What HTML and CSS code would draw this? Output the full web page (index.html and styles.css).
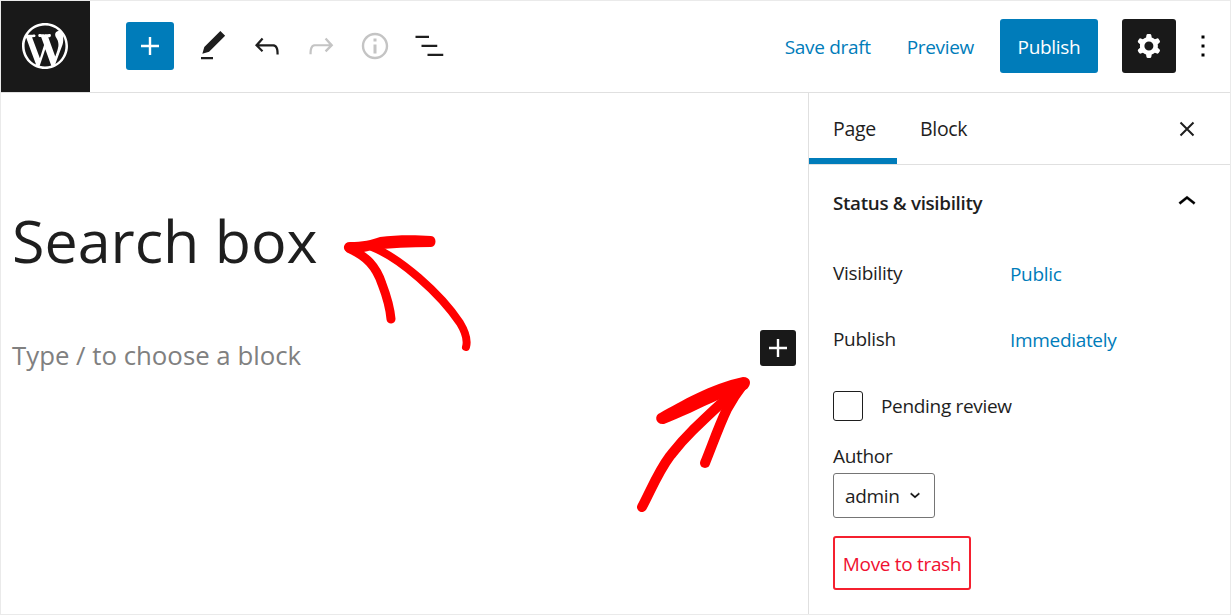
FILE: index.html
```html
<!DOCTYPE html>
<html lang="en">
<head>
<meta charset="utf-8">
<title>Search box</title>
<link rel="stylesheet" href="styles.css">
</head>
<body>
<div class="app">
  <header class="topbar">
    <div class="logo"><svg viewBox="0 0 20 20" width="46" height="46"><path fill="#fff" d="M20 10c0-5.51-4.49-10-10-10C4.48 0 0 4.49 0 10c0 5.52 4.48 10 10 10 5.51 0 10-4.48 10-10zM7.78 15.37L4.37 6.22c.55-.02 1.17-.08 1.17-.08.5-.06.44-1.13-.06-1.11 0 0-1.45.11-2.37.11-.18 0-.37 0-.58-.01C4.12 2.69 6.87 1.11 10 1.11c2.33 0 4.45.87 6.05 2.34-.68-.11-1.65.39-1.65 1.58 0 .74.45 1.36.9 2.1.35.61.55 1.36.55 2.46 0 1.49-1.4 5-1.4 5l-3.03-8.37c.54-.02.82-.17.82-.17.5-.05.44-1.25-.06-1.22 0 0-1.44.12-2.38.12-.87 0-2.33-.12-2.33-.12-.5-.03-.56 1.2-.06 1.22l.92.08 1.26 3.41zM17.41 10c.24-.64.74-1.87.43-4.25.7 1.29 1.05 2.71 1.05 4.25 0 3.29-1.73 6.24-4.4 7.78.97-2.59 1.94-5.2 2.92-7.78zM6.1 18.09C3.12 16.65 1.11 13.53 1.11 10c0-1.3.23-2.48.72-3.59C3.25 10.3 4.67 14.2 6.1 18.09zm4.03-6.63l2.58 6.98c-.86.29-1.76.45-2.71.45-.79 0-1.57-.11-2.29-.33.81-2.38 1.62-4.74 2.42-7.1z"/></svg></div>
    <button class="add-btn"><svg viewBox="0 0 24 24" width="36" height="36"><path fill="#fff" d="M18 11.2h-5.2V6h-1.6v5.2H6v1.6h5.2V18h1.6v-5.2H18z"/></svg></button>
    <div class="tools">
      <span class="tool"><svg viewBox="0 0 24 24" width="36" height="36"><path d="M20.1 5.1L16.9 2 6.2 12.7l-1.3 4.4 4.5-1.3L20.1 5.1zM4 20.8h8v-1.5H4v1.5z"/></svg></span>
      <span class="tool"><svg viewBox="0 0 24 24" width="36" height="36"><path d="M18.3 11.7c-.6-.6-1.4-.9-2.3-.9H6.7l2.9-3.3-1.1-1-4.5 5L8.5 16l1-1-2.7-2.7H16c.5 0 .9.2 1.3.5 1 1 1 3.4 1 4.5v.3h1.5v-.2c0-1.5 0-4.3-1.5-5.7z"/></svg></span>
      <span class="tool off"><svg viewBox="0 0 24 24" width="36" height="36"><path d="M15.6 6.5l-1.1 1 2.9 3.3H8c-.9 0-1.7.3-2.3.9-1.4 1.5-1.4 4.2-1.4 5.6v.2h1.5v-.3c0-1.1 0-3.5 1-4.5.3-.3.7-.5 1.3-.5h9.2L14.5 15l1.1 1.1 4.6-4.6-4.6-5z"/></svg></span>
      <span class="tool off"><svg viewBox="0 0 24 24" width="36" height="36"><path d="M12 3.2c-4.8 0-8.8 3.9-8.8 8.8 0 4.8 3.9 8.8 8.8 8.8 4.8 0 8.8-3.9 8.8-8.8 0-4.8-4-8.800-8.800-8.800zm0 16c-4 0-7.200-3.300-7.200-7.200C4.800 8 8 4.800 12 4.800s7.200 3.300 7.200 7.200c0 4-3.200 7.200-7.200 7.200zM11 17h2v-6h-2v6zm0-8h2V7h-2v2z"/></svg></span>
      <span class="tool"><svg viewBox="0 0 24 24" width="36" height="36"><path d="M3 5.200h9v1.500H3zM7 11.200h10.500v1.500H7zM11 17.200h10.500v1.500H11z"/></svg></span>
    </div>
    <div class="actions">
      <a class="link save">Save draft</a>
      <a class="link preview">Preview</a>
      <button class="publish">Publish</button>
      <button class="gear"><svg viewBox="0 0 24 24" width="36" height="36"><path fill="#fff" fill-rule="evenodd" d="M10.289 4.836A1 1 0 0111.275 4h1.306a1 1 0 01.987.836l.244 1.466c.787.26 1.503.679 2.108 1.218l1.393-.522a1 1 0 011.216.437l.653 1.13a1 1 0 01-.23 1.273l-1.148.944a6.025 6.025 0 010 2.435l1.149.946a1 1 0 01.23 1.272l-.653 1.13a1 1 0 01-1.216.437l-1.394-.522c-.605.54-1.32.958-2.108 1.218l-.244 1.466a1 1 0 01-.987.836h-1.306a1 1 0 01-.986-.836l-.244-1.466a5.995 5.995 0 01-2.108-1.218l-1.394.522a1 1 0 01-1.217-.436l-.653-1.131a1 1 0 01.23-1.272l1.149-.946a6.026 6.026 0 010-2.435l-1.148-.944a1 1 0 01-.23-1.272l.653-1.131a1 1 0 011.217-.437l1.393.522a5.994 5.994 0 012.108-1.218l.244-1.466zM14.929 12a3 3 0 11-6 0 3 3 0 016 0z"/></svg></button>
      <span class="more"><svg viewBox="0 0 24 24" width="36" height="36"><path d="M13 19h-2v-2h2v2zm0-6h-2v-2h2v2zm0-6h-2V5h2v2z"/></svg></span>
    </div>
  </header>
  <div class="workspace">
    <main class="editor">
      <h1 class="title">Search box</h1>
      <div class="block-row">
        <p class="placeholder">Type / to choose a block</p>
        <button class="block-add"><svg viewBox="0 0 24 24" width="36" height="36"><path fill="#fff" d="M18 11.200h-5.200V6h-1.600v5.200H6v1.600h5.200V18h1.600v-5.200H18z"/></svg></button>
      </div>
    </main>
    <aside class="sidebar">
      <div class="tabs">
        <span class="tab active">Page</span>
        <span class="tab">Block</span>
        <span class="close"><svg viewBox="0 0 24 24" width="24" height="24"><path fill="none" stroke="#1e1e1e" stroke-width="2" d="M5.500 5.500 18.500 18.500M18.500 5.500 5.500 18.500"/></svg></span>
      </div>
      <section class="panel">
        <div class="panel-head">
          <h2 class="panel-title">Status &amp; visibility</h2>
          <svg class="chev" viewBox="0 0 24 24" width="36" height="36"><path stroke="#1e1e1e" stroke-width=".2" d="M6.500 12.400L12 8l5.500 4.400-.9 1.200L12 10l-4.500 3.600-1-1.200z"/></svg>
        </div>
        <div class="row"><span>Visibility</span><a class="link">Public</a></div>
        <div class="row"><span>Publish</span><a class="link">Immediately</a></div>
        <label class="check"><span class="box"></span><span>Pending review</span></label>
        <div class="author-label">Author</div>
        <div class="select">admin<svg viewBox="0 0 24 24" width="20" height="20"><path stroke="#1e1e1e" stroke-width=".6" d="M17.500 9.500 12 14.500 6.500 9.500l1.100-1.100 4.400 4 4.400-4z"/></svg></div>
        <button class="trash">Move to trash</button>
      </section>
    </aside>
  </div>
  <svg class="arrows" viewBox="0 0 1231 615" width="1231" height="615" fill="none" stroke="#f00" stroke-linecap="round" stroke-linejoin="round">
    <path fill="#f00" stroke="none" d="M350 242C362 242 372 240 380 237C395 235 415 235 431 236C437 236 437 247 431 247C410 247 390 248 372 250C362 253 352 254 347 252C342 250 343 242 350 242Z"/>
    <path stroke-width="9" d="M350 249C366 256 376 266 382 284C387 297 390 308 391 319"/>
    <path stroke-width="8" d="M372 247C400 258 440 293 460 323C466 333 468 340 466 347"/>
    <path fill="#f00" stroke="none" d="M743 377C751 377 752 384 747 389L720 399C700 408 680 418 664 424C655 425 654 415 660 413C680 402 710 384 743 377Z"/>
    <path stroke-width="10" d="M742 386C722 401 708 416 693 430C680 443 678 446 670 456C658 472 651 490 642 507"/>
    <path stroke-width="10" d="M742 386C735 395 732 400 727 409C718 428 712 446 705 463"/>
  </svg>
</div>
</body>
</html>
```
FILE: styles.css
```css
* { box-sizing: border-box; }
html, body { margin: 0; padding: 0; }
body {
  width: 1231px;
  height: 615px;
  overflow: hidden;
  background: #fff;
  color: #1e1e1e;
  font-family: "Open Sans", "Noto Sans", sans-serif;
  font-size: 19px;
  letter-spacing: -0.32px;
}
button { font: inherit; letter-spacing: inherit; border: 0; padding: 0; cursor: pointer; }
svg { display: block; }

.app {
  position: relative;
  display: flex;
  flex-direction: column;
  height: 615px;
  border: 1px solid #eaeaea;
}

.topbar {
  display: flex;
  align-items: center;
  height: 92px;
  flex: none;
  padding-bottom: 2px;
  border-bottom: 1px solid #e0e0e0;
}
.logo {
  align-self: flex-start;
  width: 89px;
  height: 91px;
  padding: 0 2px 1px 0;
  background: #191919;
  display: flex;
  align-items: center;
  justify-content: center;
}
.add-btn {
  width: 48px;
  height: 48px;
  margin-left: 36px;
  border-radius: 3px;
  background: #007cba;
  display: flex;
  align-items: center;
  justify-content: center;
}
.tools { display: flex; margin-left: 12px; }
.tool {
  width: 54px;
  display: flex;
  justify-content: center;
  fill: #1e1e1e;
}
.tool.off { fill: #c4c4c4; }

.actions {
  margin-left: auto;
  display: flex;
  align-items: center;
}
.link { color: #007cba; }
.save { margin: 2px 36px 0 0; }
.preview { margin: 2px 26px 0 0; }
.publish {
  width: 98px;
  height: 54px;
  padding-top: 2px;
  border-radius: 3px;
  background: #007cba;
  color: #fff;
  margin-right: 24px;
}
.gear {
  width: 54px;
  height: 54px;
  border-radius: 3px;
  background: #191919;
  display: flex;
  align-items: center;
  justify-content: center;
}
.more { margin: 0 9px; }

.workspace { flex: 1; display: flex; min-height: 0; }

.editor { flex: 1; padding: 0 12px 0 11px; }
.title {
  margin: 111px 0 0;
  font-size: 59.200px;
  line-height: 72px;
  font-weight: 400;
  letter-spacing: 0;
}
.block-row {
  display: flex;
  align-items: flex-start;
  justify-content: space-between;
  margin-top: 54px;
}
.placeholder {
  margin: 7px 0 0;
  color: #808080;
  font-size: 25.800px;
  line-height: 36px;
  letter-spacing: 0;
}
.block-add {
  width: 36px;
  height: 36px;
  border-radius: 3px;
  background: #191919;
}

.sidebar { width: 422px; flex: none; border-left: 1px solid #e0e0e0; }
.tabs {
  display: flex;
  align-items: stretch;
  height: 72px;
  border-bottom: 1px solid #e0e0e0;
}
.tab {
  display: flex;
  align-items: center;
  padding: 0 24px;
  font-weight: 500;
  font-size: 19.500px;
  margin-right: -1px;
}
.tab.active { width: 88px; box-shadow: inset 0 -6px 0 #007cba; }
.close { margin-left: auto; margin-right: 31px; align-self: center; }

.panel { padding: 0 24px; }
.panel-head {
  display: flex;
  align-items: center;
  justify-content: space-between;
  height: 75px;
  padding-right: 1px;
}
.chev { margin-bottom: 2px; }
.panel-title { margin: 0; font-size: 18.800px; font-weight: 600; }
.row {
  display: grid;
  grid-template-columns: 177px 1fr;
  height: 66px;
  align-items: center;
}
.row .link { margin-top: 2px; }
.check { display: flex; align-items: center; gap: 18px; height: 66px; margin-top: 1px; }
.box { width: 30px; height: 30px; border: 1px solid #1e1e1e; border-radius: 3px; }
.author-label { margin-top: 1px; line-height: 32px; }
.select {
  display: flex;
  align-items: center;
  justify-content: space-between;
  width: 102px;
  height: 45px;
  margin-top: 1px;
  padding: 0 9px 0 11px;
  border: 1px solid #757575;
  border-radius: 3px;
}
.trash {
  display: block;
  margin-top: 18px;
  width: 138px;
  height: 54px;
  padding-top: 2px;
  background: #fff;
  color: #f01030;
  border: 2px solid #f5202f;
  border-radius: 3px;
}

.arrows { position: absolute; left: -1px; top: -1px; pointer-events: none; }
```
